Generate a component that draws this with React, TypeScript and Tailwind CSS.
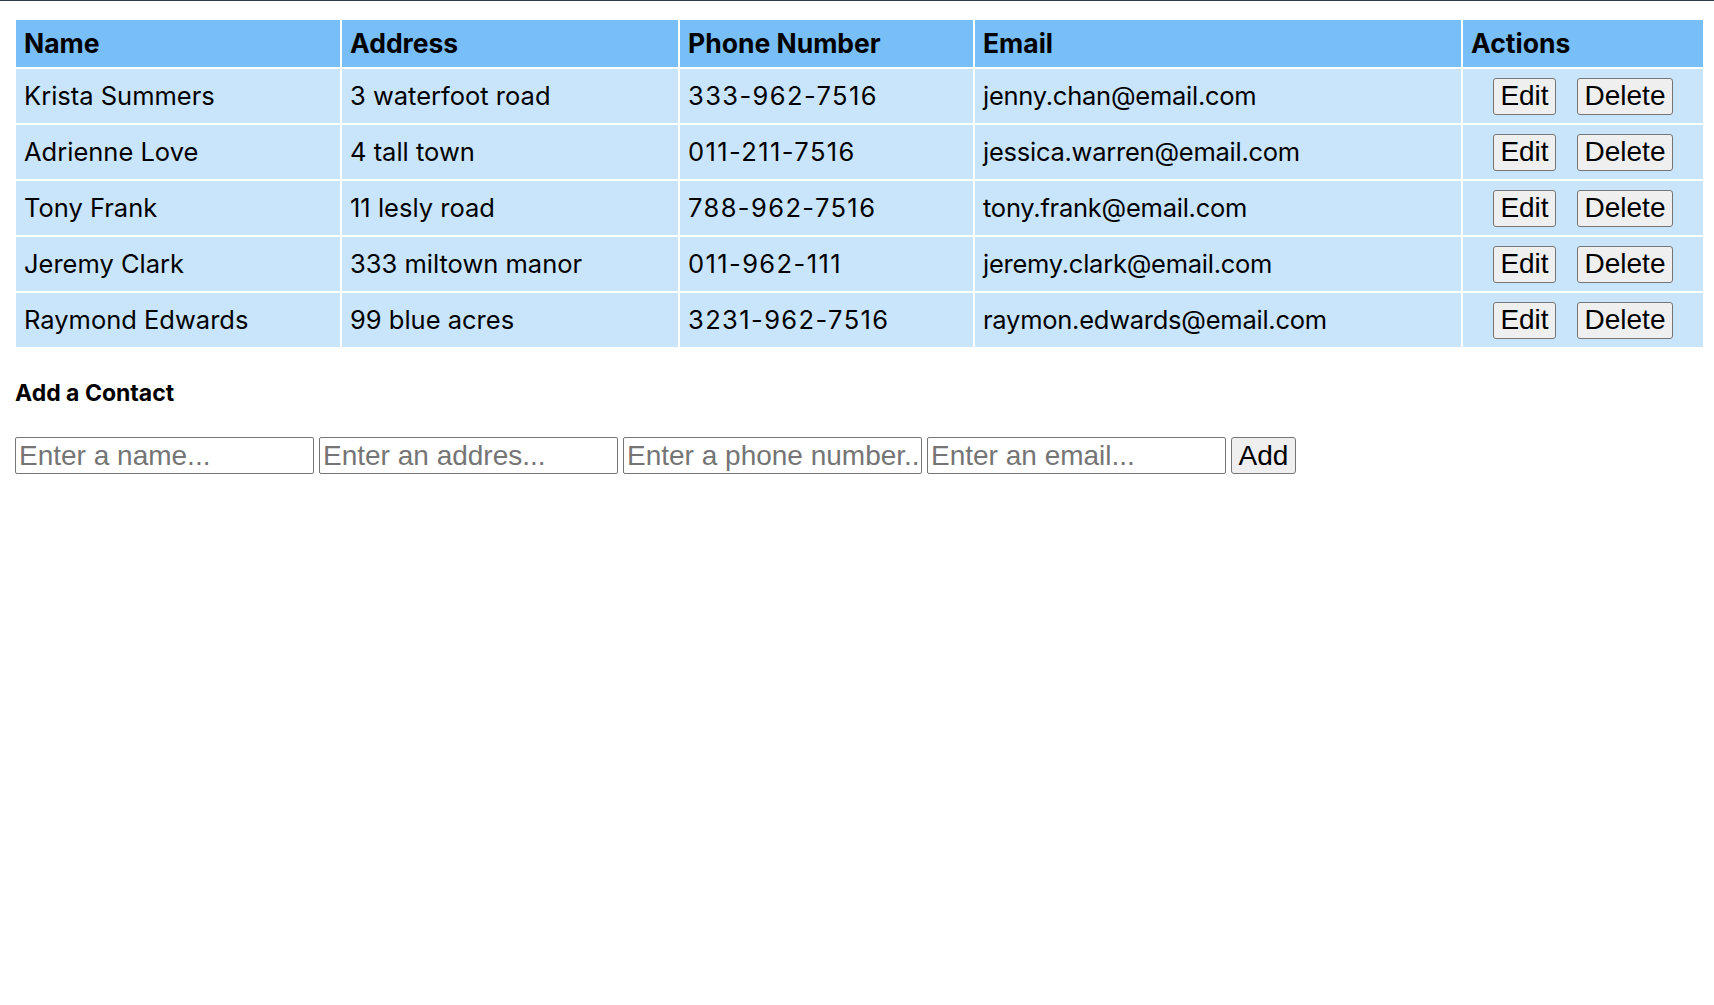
import React from "react";

const contacts = [
  { name: "Krista Summers", address: "3 waterfoot road", phone: "333-962-7516", email: "jenny.chan@email.com" },
  { name: "Adrienne Love", address: "4 tall town", phone: "011-211-7516", email: "jessica.warren@email.com" },
  { name: "Tony Frank", address: "11 lesly road", phone: "788-962-7516", email: "tony.frank@email.com" },
  { name: "Jeremy Clark", address: "333 miltown manor", phone: "011-962-111", email: "jeremy.clark@email.com" },
  { name: "Raymond Edwards", address: "99 blue acres", phone: "3231-962-7516", email: "raymon.edwards@email.com" },
];

export default function App() {
  const btn =
    "h-[37px] px-0 bg-[#efefef] border border-[#767676] rounded-[3px] text-[28px] leading-none text-black font-['Liberation_Sans',Arial,sans-serif]";
  const input =
    "w-[299px] h-[37px] px-[3px] border border-[#767676] rounded-[2px] text-[28px] text-black placeholder:text-[#757575] font-['Liberation_Sans',Arial,sans-serif] outline-none";
  const td = "h-[56px] border-2 border-white px-[8px] text-[25.5px] leading-none";
  return (
    <div className="min-h-screen bg-white font-['Inter',sans-serif] text-black">
      <div className="h-px bg-[#2f3b4c]" />
      <div className="pt-[17px] pl-[14px]">
        <table className="w-[1689px] table-fixed border-collapse">
          <colgroup>
            <col className="w-[326px]" />
            <col className="w-[338px]" />
            <col className="w-[295px]" />
            <col className="w-[488px]" />
            <col className="w-[242px]" />
          </colgroup>
          <thead>
            <tr className="bg-[#78bef7]">
              {["Name", "Address", "Phone Number", "Email", "Actions"].map((h) => (
                <th
                  key={h}
                  className="h-[49px] border-2 border-white px-[8px] text-left text-[26.5px] font-bold leading-none"
                >
                  {h}
                </th>
              ))}
            </tr>
          </thead>
          <tbody>
            {contacts.map((c) => (
              <tr key={c.name} className="bg-[#c9e5fb]">
                <td className={td}>{c.name}</td>
                <td className={td}>{c.address}</td>
                <td className={`${td} tracking-[1.4px]`}>{c.phone}</td>
                <td className={`${td} tracking-[-0.25px]`}>{c.email}</td>
                <td className="h-[56px] border-2 border-white px-[8px]">
                  <div className="flex items-center justify-center gap-[21px]">
                    <button className={`${btn} w-[63px]`}>Edit</button>
                    <button className={`${btn} w-[96px]`}>Delete</button>
                  </div>
                </td>
              </tr>
            ))}
          </tbody>
        </table>
        <h2 className="mt-[33px] pl-[1px] text-[23px] font-bold leading-none">Add a Contact</h2>
        <div className="mt-[32px] pl-[1px] flex items-center gap-[5px]">
          <input className={input} placeholder="Enter a name..." />
          <input className={input} placeholder="Enter an addres..." />
          <input className={input} placeholder="Enter a phone number..." />
          <input className={input} placeholder="Enter an email..." />
          <button className={`${btn} w-[65px]`}>Add</button>
        </div>
      </div>
    </div>
  );
}
